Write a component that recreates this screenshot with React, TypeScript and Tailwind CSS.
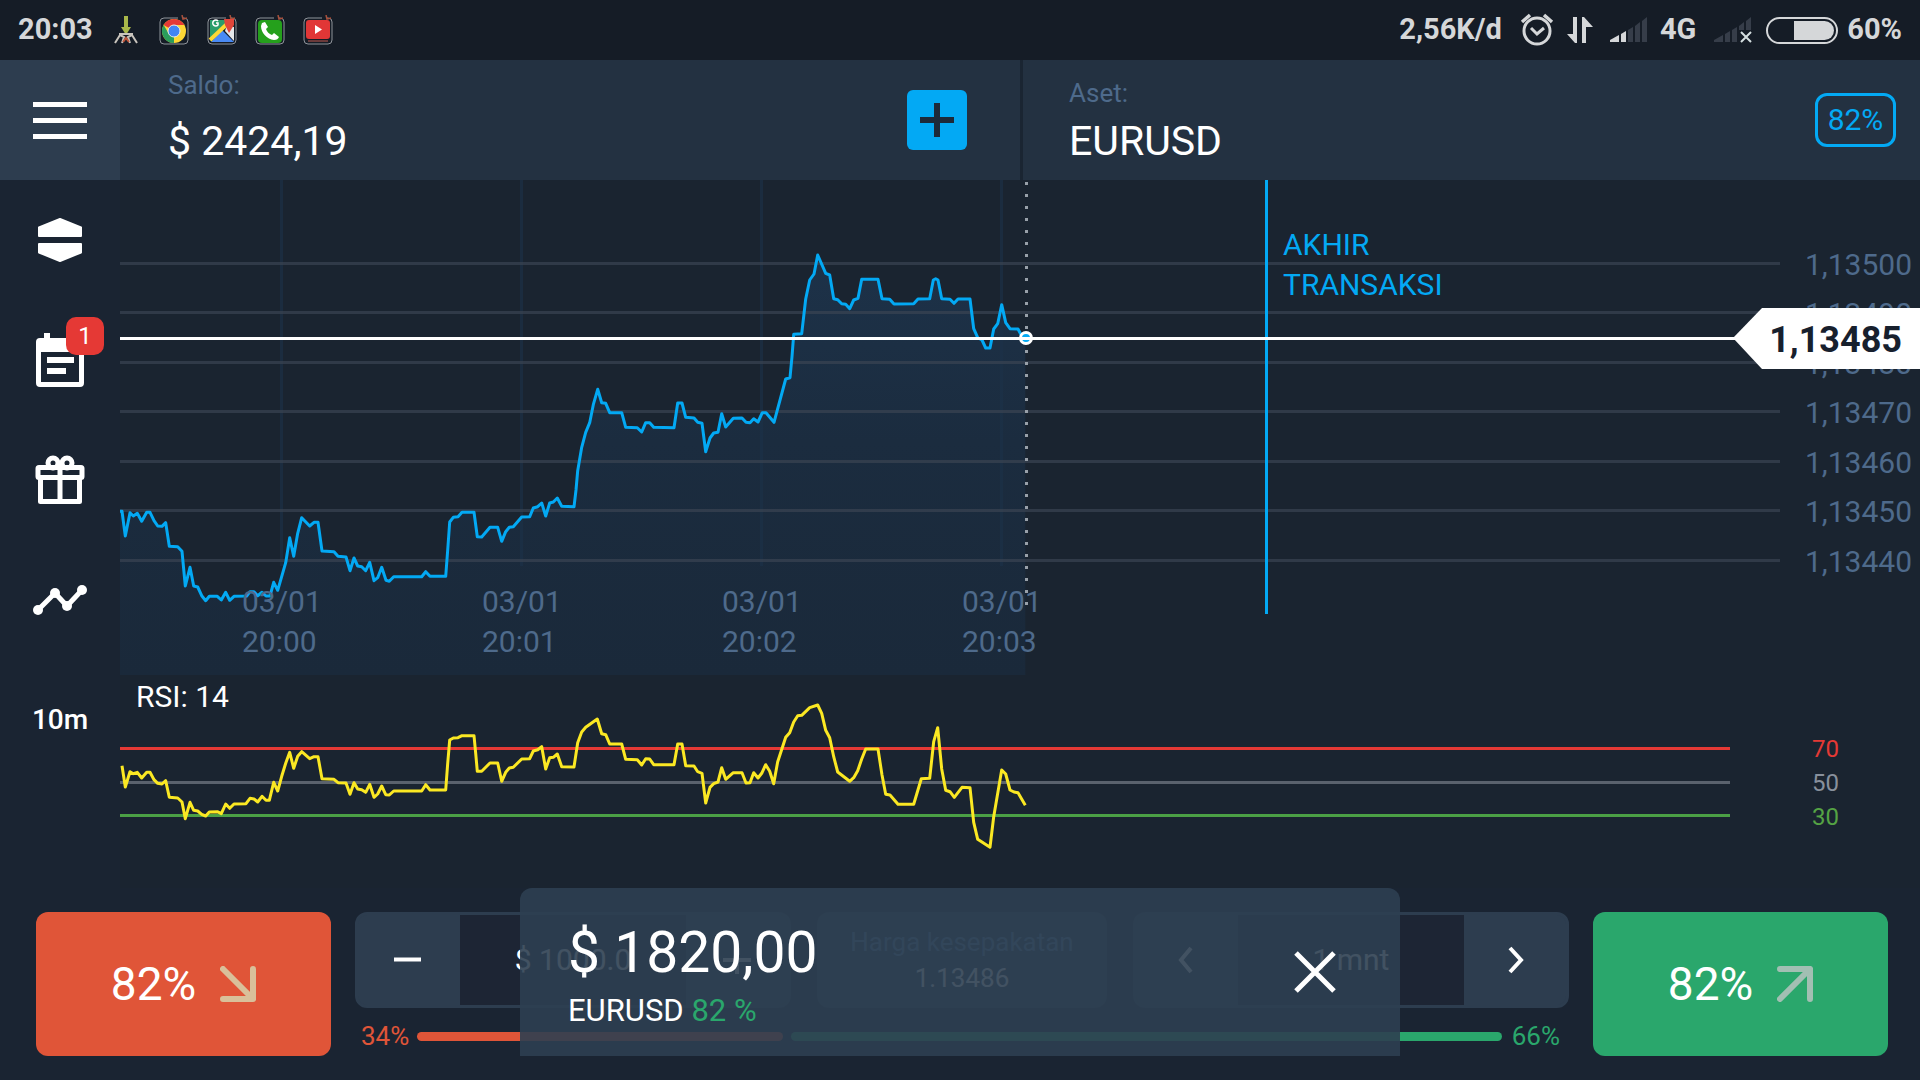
import type { ReactNode } from "react";

type Point = [number, number];

// Samples are stored at three units per chart pixel, relative to the origin of each batch.
const UNITS = 3;
const place = (points: Point[], ox: number, oy: number): Point[] =>
  points.map(([x, y]) => [ox + x / UNITS, oy + y / UNITS]);
const toPath = (points: Point[]) =>
  "M" + points.map(([x, y]) => `${x.toFixed(1)} ${y.toFixed(1)}`).join("L");

const price: Point[] = [
  ...place(
    [
      [60, 94], [66, 94], [76, 168], [90, 98], [100, 108], [112, 100], [125, 124], [140, 97], [150, 97], [162, 122],
      [173, 138], [186, 139], [197, 128], [208, 199], [233, 200], [246, 214], [256, 318], [270, 262], [281, 318],
      [293, 321], [305, 347], [317, 362], [328, 349], [352, 349], [364, 360], [377, 337], [389, 361], [402, 349],
      [440, 348], [450, 335], [462, 335], [473, 347], [486, 337], [498, 348], [510, 348], [521, 307], [533, 331],
      [557, 248], [569, 173], [581, 229], [593, 160], [605, 113], [629, 138], [642, 127], [654, 127], [666, 213],
      [702, 215], [714, 229], [738, 231], [750, 272], [762, 234], [773, 258], [785, 260], [797, 272], [809, 247],
      [822, 302], [833, 293], [845, 262], [858, 301], [868, 304], [881, 290], [965, 290], [977, 275], [990, 289],
      [1037, 289], [1043, 210], [1049, 126], [1060, 112], [1074, 110], [1086, 97], [1122, 97], [1132, 170],
      [1145, 171], [1170, 142], [1193, 142], [1205, 184], [1217, 155], [1228, 142], [1240, 140], [1265, 111],
      [1289, 110], [1300, 84], [1313, 80], [1325, 69],
    ],
    100,
    480,
  ),
  ...place(
    [
      [17, 858], [29, 819], [40, 816], [52, 804], [65, 829], [102, 830], [108, 780], [113, 722], [125, 652],
      [137, 607], [149, 578], [160, 524], [173, 478], [185, 518], [197, 520], [209, 548], [245, 548], [257, 592],
      [292, 593], [305, 606], [317, 578], [329, 578], [341, 592], [402, 593], [413, 519], [426, 519], [437, 562],
      [462, 564], [473, 577], [486, 580], [497, 665], [510, 624], [521, 609], [534, 607], [545, 551], [557, 591],
      [580, 565], [606, 564], [618, 577], [630, 578], [641, 566], [654, 576], [667, 548], [678, 548], [702, 577],
      [737, 447], [750, 443], [756, 380], [761, 313], [785, 311], [797, 207], [809, 150], [822, 132], [833, 75],
      [857, 130], [869, 135], [881, 206], [893, 209], [905, 221], [917, 223], [929, 236], [941, 210], [954, 205],
      [965, 148], [1014, 148], [1026, 206], [1049, 208], [1062, 222], [1121, 221], [1134, 207], [1169, 206],
      [1180, 150], [1187, 146], [1194, 150], [1205, 206], [1230, 208], [1242, 220], [1254, 207], [1290, 207],
      [1301, 296], [1313, 323], [1326, 330], [1337, 354], [1350, 354], [1361, 297], [1373, 281], [1385, 224],
      [1397, 278], [1410, 296], [1434, 297], [1442, 312], [1456, 325],
    ],
    540,
    230,
  ),
];

const rsi: Point[] = [
  ...place(
    [
      [66, 857], [76, 921], [90, 875], [100, 881], [112, 877], [125, 894], [140, 877], [150, 877], [162, 899],
      [173, 910], [186, 912], [197, 902], [208, 952], [233, 954], [246, 966], [256, 1016], [270, 967], [281, 991],
      [293, 993], [305, 1003], [317, 1008], [328, 996], [352, 995], [364, 1001], [377, 972], [389, 985], [402, 972],
      [438, 971], [450, 955], [462, 957], [473, 966], [486, 949], [498, 961], [508, 961], [521, 907], [533, 933],
      [545, 889], [557, 850], [569, 817], [581, 865], [593, 829], [605, 815], [629, 836], [642, 830], [654, 830],
      [666, 896], [702, 898], [714, 908], [738, 909], [750, 943], [762, 908], [773, 927], [785, 929], [797, 937],
      [809, 913], [822, 952], [833, 942], [845, 918], [857, 944], [868, 945], [881, 933], [965, 933], [977, 914],
      [990, 930], [1037, 930], [1043, 850], [1049, 780], [1060, 774], [1074, 773], [1086, 767], [1122, 767],
      [1127, 820], [1132, 874], [1145, 874], [1170, 849], [1193, 849], [1205, 904], [1217, 877], [1228, 864],
      [1240, 862], [1265, 837], [1289, 836], [1300, 813], [1313, 809], [1325, 800],
    ],
    100,
    480,
  ),
  ...place(
    [
      [17, 627], [29, 593], [40, 592], [52, 582], [65, 620], [102, 621], [113, 548], [125, 516], [137, 502],
      [172, 477], [185, 521], [197, 524], [209, 552], [245, 552], [257, 598], [292, 599], [305, 615], [317, 596],
      [329, 597], [341, 614], [402, 614], [413, 552], [426, 552], [437, 617], [462, 618], [473, 635], [486, 640],
      [497, 729], [510, 682], [521, 671], [534, 666], [545, 623], [557, 658], [580, 638], [606, 638], [618, 669],
      [630, 668], [641, 638], [654, 654], [665, 640], [677, 614], [689, 634], [701, 671], [713, 605], [737, 532],
      [749, 518], [761, 486], [773, 467], [785, 466], [809, 443], [833, 435], [845, 460], [857, 511], [869, 533],
      [881, 590], [893, 636], [929, 664], [941, 653], [953, 632], [965, 597], [977, 567], [1014, 567], [1026, 645],
      [1037, 703], [1050, 705], [1074, 733], [1121, 733], [1144, 656], [1169, 655], [1181, 545], [1193, 503],
      [1205, 627], [1217, 691], [1230, 695], [1243, 712], [1266, 682], [1290, 683], [1301, 787], [1313, 838],
      [1350, 862], [1361, 770], [1385, 630], [1397, 642], [1410, 690], [1422, 696], [1434, 698], [1456, 736],
    ],
    540,
    560,
  ),
];

const priceLine = toPath(price);
const priceArea = `${priceLine}V675H120Z`;
const rsiLine = toPath(rsi);

const priceLevels = [
  { y: 263, label: "1,13500" },
  { y: 312, label: "1,13490" },
  { y: 362, label: "1,13480" },
  { y: 411, label: "1,13470" },
  { y: 461, label: "1,13460" },
  { y: 510, label: "1,13450" },
  { y: 560, label: "1,13440" },
];

const timeMarks = [
  { x: 281, day: "03/01", time: "20:00" },
  { x: 521, day: "03/01", time: "20:01" },
  { x: 761, day: "03/01", time: "20:02" },
  { x: 1001, day: "03/01", time: "20:03" },
];

function Chart() {
  return (
    <svg viewBox="120 180 1800 708" className="block h-auto w-full bg-[#1a2430]" role="img" aria-label="EURUSD">
      <defs>
        <linearGradient id="area" gradientUnits="userSpaceOnUse" x1="0" y1="250" x2="0" y2="675">
          <stop offset="0" stopColor="#1d3249" />
          <stop offset="0.45" stopColor="#1b2c3f" />
          <stop offset="1" stopColor="#1a293a" />
        </linearGradient>
      </defs>
      <path d={priceArea} fill="url(#area)" />
      {timeMarks.map((m) => (
        <rect key={m.x} x={m.x - 1} y="180" width="3" height="386" fill="#1d3249" opacity="0.6" />
      ))}
      {priceLevels.map((l) => (
        <rect key={l.y} x="120" y={l.y - 1} width="1660" height="3" fill="#3a4452" opacity="0.7" />
      ))}
      <path d={priceLine} fill="none" stroke="#03a9f4" strokeWidth="3" strokeLinejoin="round" />
      <path d="M1026.5 182V606" stroke="#98a0a9" strokeWidth="3" strokeDasharray="3 9" />
      <g fontSize="30" fill="#4e6a8b">
        {timeMarks.map((m) => (
          <g key={m.x}>
            <text x={m.x - 39} y="612">
              {m.day}
            </text>
            <text x={m.x - 39} y="652">
              {m.time}
            </text>
          </g>
        ))}
        {priceLevels.map((l) => (
          <text key={l.y} x="1912" y={l.y + 12} textAnchor="end">
            {l.label}
          </text>
        ))}
      </g>
      <rect x="1265" y="180" width="3" height="434" fill="#03a9f4" />
      <g fontSize="30" fill="#03a9f4">
        <text x="1283" y="255">
          AKHIR
        </text>
        <text x="1283" y="295">
          TRANSAKSI
        </text>
      </g>
      <rect x="120" y="337" width="1620" height="3" fill="#fff" />
      <circle cx="1026" cy="338" r="5.500" fill="#03a9f4" stroke="#fff" strokeWidth="3" />
      <rect x="1020" y="337" width="12" height="3" fill="#fff" />
      <path d="M1733 338L1762 308H1920V369H1762Z" fill="#fff" />
      <text x="1902" y="352" textAnchor="end" fontSize="36" fontWeight="700" fill="#17202d">
        1,13485
      </text>

      <text x="136" y="707" fontSize="30" fill="#fff">
        RSI: 14
      </text>
      <rect x="120" y="747" width="1610" height="3" fill="#e53935" />
      <rect x="120" y="781" width="1610" height="3" fill="#5a626d" />
      <rect x="120" y="814" width="1610" height="3" fill="#4ba045" />
      <path d={rsiLine} fill="none" stroke="#fbe823" strokeWidth="3" strokeLinejoin="round" />
      <g fontSize="24">
        <text x="1812" y="757" fill="#e53935">
          70
        </text>
        <text x="1812" y="791" fill="#88909c">
          50
        </text>
        <text x="1812" y="825" fill="#55a344">
          30
        </text>
      </g>
    </svg>
  );
}

function AppTile({ children }: { children: ReactNode }) {
  return (
    <svg viewBox="0 0 30 30" className="size-[30px]" aria-hidden="true">
      <rect x="1" y="3" width="28" height="26" rx="4" fill="#151c26" stroke="#8f949a" strokeWidth="1" />
      <path d="M19 3H24" stroke="#151c26" strokeWidth="2" />
      <path d="M23 0L24 4L28 3" fill="none" stroke="#a8503c" strokeWidth="1.500" />
      {children}
    </svg>
  );
}

function SignalBars({ lit }: { lit: number }) {
  const bars = ["M0 26V24L9 19V26Z", "M11 26V18L16 15V26Z", "M18 26V14L23 11V26Z", "M25 26V10L30 6V26Z", "M32 26V5L37 1V26Z"];
  return (
    <svg viewBox="0 0 38 28" className="h-7 w-[38px]" aria-hidden="true">
      {bars.map((d, i) => (
        <path key={d} d={d} fill={i < lit ? "#d5d7d9" : "#363d49"} />
      ))}
      {lit === 0 && (
        <>
          <rect x="25" y="14" width="13" height="14" fill="#151c26" />
          <path d="M27 16L37 26M37 16L27 26" stroke="#d5dfe0" strokeWidth="2" />
        </>
      )}
    </svg>
  );
}

function StatusBar() {
  return (
    <div className="flex h-[60px] items-center justify-between bg-[#151c26] pr-[18px] pl-[18px] text-[29px] font-bold text-[#d5d7d9]">
      <div className="flex items-center gap-[18px]">
        <span>20:03</span>
        <svg viewBox="0 0 30 30" className="size-[30px]" aria-hidden="true">
          <path d="M13 1H17V12H20L15 20L10 12H13Z" fill="#a9b84a" />
          <path d="M4 28L9 20L13 22L11 28M26 28L21 20L17 22L19 28M8 19H22" fill="none" stroke="#c9c4bd" strokeWidth="2" />
          <path d="M12 27L15 23L18 27" fill="none" stroke="#c0563c" strokeWidth="2" />
        </svg>
        <AppTile>
          <circle cx="15" cy="16" r="12" fill="#fdd835" />
          <path d="M15 16L4.600 10A12 12 0 0 1 25.400 10H15Z" fill="#e53935" />
          <path d="M15 16V28A12 12 0 0 1 4.600 10L10 19Z" fill="#2a9d5c" />
          <circle cx="15" cy="16" r="6" fill="#4285f4" stroke="#e8ecef" strokeWidth="1" />
        </AppTile>
        <AppTile>
          <path d="M3 5H20V12L3 26Z" fill="#2a9d6a" />
          <path d="M4 27L15 15L27 27Z" fill="#4a8af4" />
          <path d="M20 10L27 12V26L18 16Z" fill="#e6e8ea" />
          <path d="M3 25L20 9" stroke="#fdd835" strokeWidth="4" />
          <path d="M17 4H27V10L22 18L18 10Z" fill="#e0463a" />
          <path d="M11 6A3 3 0 1 0 11 10V8H9" fill="none" stroke="#fff" strokeWidth="1.500" />
        </AppTile>
        <AppTile>
          <rect x="3" y="5" width="24" height="23" rx="4" fill="#25a01c" />
          <path
            d="M7 8L10 7L13 12L11 14C12 17 14 19 17 20L19 18L24 22C23 24 22 25 19 25C12 24 6 18 6 11Z"
            fill="#fff"
          />
        </AppTile>
        <AppTile>
          <rect x="3" y="5" width="24" height="19" rx="3" fill="#e13636" />
          <rect x="5" y="25" width="20" height="2" fill="#6b3a3a" />
          <path d="M12 10V19L19 14.500Z" fill="#fff" />
        </AppTile>
      </div>
      <div className="flex items-center">
        <span>2,56K/d</span>
        <svg viewBox="0 0 34 34" className="ml-[18px] size-[34px]" fill="none" stroke="#d5d7d9" aria-hidden="true">
          <circle cx="17" cy="18" r="13" strokeWidth="3" />
          <path d="M2 9L10 2M32 9L24 2" strokeWidth="3.500" />
          <path d="M11 15L17 21L24 15" strokeWidth="3" />
        </svg>
        <svg viewBox="0 0 28 28" className="ml-3 size-7" fill="#d5d7d9" aria-hidden="true">
          <path d="M7 1H11V27H9L1 18H7ZM16 1H18L27 11H20V27H16Z" />
        </svg>
        <span className="ml-4 flex">
          <SignalBars lit={2} />
        </span>
        <span className="ml-3">4G</span>
        <span className="ml-[18px] flex">
          <SignalBars lit={0} />
        </span>
        <span className="ml-[14px] flex h-[27px] w-[72px] justify-end rounded-full border-2 border-[#d5d7d9] p-[2px]">
          <span className="w-10 rounded-r-full bg-[#d5d7d9]" />
        </span>
        <span className="ml-[9px]">60%</span>
      </div>
    </div>
  );
}

function Header() {
  return (
    <header className="flex h-[120px] bg-[#233141] text-white">
      <button type="button" aria-label="Menu" className="flex w-[120px] shrink-0 items-center justify-center bg-[#2d3d4f]">
        <span className="flex w-[54px] flex-col gap-[11px]">
          <span className="h-[5px] bg-white" />
          <span className="h-[5px] bg-white" />
          <span className="h-[5px] bg-white" />
        </span>
      </button>
      <div className="grid flex-1 grid-cols-2">
        <div className="flex items-center justify-between pr-[53px] pl-12">
          <div className="flex flex-col gap-4 self-start pt-[9px]">
            <span className="text-[26px] leading-8 text-[#4e6a8b]">Saldo:</span>
            <span className="text-[41px] leading-[48px]">$ 2424,19</span>
          </div>
          <button
            type="button"
            aria-label="Deposit"
            className="flex size-[60px] items-center justify-center rounded-md bg-[#03a9f4]"
          >
            <svg viewBox="0 0 34 34" className="size-[34px]" aria-hidden="true">
              <path d="M17 0V34M0 17H34" stroke="#1d2a3a" strokeWidth="6" />
            </svg>
          </button>
        </div>
        <div className="flex items-center justify-between border-l-[3px] border-[#1a2532] pr-6 pl-[46px]">
          <div className="flex flex-col gap-2 self-start pt-[17px]">
            <span className="text-[26px] leading-8 text-[#4e6a8b]">Aset:</span>
            <span className="text-[41px] leading-[48px]">EURUSD</span>
          </div>
          <button
            type="button"
            className="flex h-[54px] w-[81px] items-center justify-center rounded-xl border-[3px] border-[#03a9f4] text-3xl text-[#03a9f4]"
          >
            82%
          </button>
        </div>
      </div>
    </header>
  );
}

function SideItem({ label, children }: { label: string; children: ReactNode }) {
  return (
    <button type="button" aria-label={label} className="flex h-[120px] w-full items-center justify-center">
      {children}
    </button>
  );
}

function Sidebar() {
  return (
    <nav className="w-[120px] shrink-0 bg-[#1a2432] text-white">
      <SideItem label="Assets">
        <svg viewBox="0 0 44 44" className="size-11" fill="currentColor" stroke="currentColor" strokeWidth="2" strokeLinejoin="round" aria-hidden="true">
          <path d="M1 18V9.500L22 1L43 9.500V18Z" />
          <path d="M1 26V34.500L22 43L43 34.500V26Z" />
        </svg>
      </SideItem>
      <SideItem label="Events">
        <span className="relative flex">
          <svg viewBox="0 0 50 54" className="h-[54px] w-[50px]" aria-hidden="true">
            <path d="M9 0H15V5H36V0H42V5H45A4 4 0 0 1 49 9V50A4 4 0 0 1 45 54H5A4 4 0 0 1 1 50V9A4 4 0 0 1 5 5H9Z" fill="#fff" />
            <rect x="6" y="19" width="38" height="30" fill="#1a2432" />
            <path d="M12 27H39M12 38H31" stroke="#fff" strokeWidth="6" />
          </svg>
          <span className="absolute -top-4 left-[31px] flex h-[38px] w-[38px] items-center justify-center rounded-[10px] bg-[#e53935] text-2xl">
            1
          </span>
        </span>
      </SideItem>
      <SideItem label="Bonuses">
        <svg viewBox="0 0 50 50" className="size-[50px]" fill="none" stroke="currentColor" strokeWidth="5" strokeLinejoin="round" aria-hidden="true">
          <circle cx="18" cy="8" r="5" />
          <circle cx="32" cy="8" r="5" />
          <rect x="3" y="12.500" width="44" height="10" rx="1" />
          <path d="M5.500 22V46.500H44.500V22M25 12V46" />
        </svg>
      </SideItem>
      <SideItem label="Indicators">
        <svg viewBox="0 0 54 32" className="h-8 w-[54px]" aria-hidden="true">
          <path d="M5 26L22 9L34 22L49 6" fill="none" stroke="#fff" strokeWidth="5" />
          <g fill="#fff">
            <circle cx="5" cy="26" r="5" />
            <circle cx="22" cy="9" r="5" />
            <circle cx="34" cy="22" r="5" />
            <circle cx="49" cy="6" r="5" />
          </g>
        </svg>
      </SideItem>
      <SideItem label="Timeframe">
        <span className="text-[28px] font-medium">10m</span>
      </SideItem>
    </nav>
  );
}

function StepButton({ label, d }: { label: string; d: string }) {
  return (
    <button type="button" aria-label={label} className="flex w-[102px] shrink-0 items-center justify-center text-white">
      <svg viewBox="0 0 30 30" className="size-[30px]" fill="none" stroke="currentColor" strokeWidth="4" aria-hidden="true">
        <path d={d} />
      </svg>
    </button>
  );
}

function Stepper({ label, value, down, up }: { label: string; value: string; down: string; up: string }) {
  return (
    <div className="flex h-24 min-w-0 flex-[435] rounded-xl border-[3px] border-[#2d3d4f] bg-[#2d3d4f]">
      <StepButton label={`${label} -`} d={down} />
      <input aria-label={label} defaultValue={value} className="w-full min-w-0 flex-1 bg-[#1d2534] text-center text-3xl text-white" />
      <StepButton label={`${label} +`} d={up} />
    </div>
  );
}

function TradeFooter() {
  return (
    <footer className="relative flex gap-6 bg-[#1a2432] pt-6 pr-8 pb-6 pl-9">
      <button type="button" className="flex h-36 w-[295px] shrink-0 items-center justify-center gap-6 rounded-xl bg-[#e05538] text-[46px] text-white">
        82%
        <svg viewBox="0 0 36 36" className="size-9" fill="none" stroke="#d9c09a" strokeWidth="6" strokeLinejoin="round" strokeLinecap="round" aria-hidden="true">
          <path d="M3 3L33 33M33 3V33H3" />
        </svg>
      </button>
      <div className="min-w-0 flex-1">
        <div className="flex gap-[26px]">
          <Stepper label="Investasi" value="$ 1000.0" down="M0 14.500H27" up="M1 15H29M15 1V29" />
          <div className="flex h-24 min-w-0 flex-[293] flex-col items-center justify-center rounded-xl bg-[#2d3d4f] text-[26px] leading-9">
            <span className="whitespace-nowrap text-[#5f83ad]">Harga kesepakatan</span>
            <span className="text-white">1.13486</span>
          </div>
          <Stepper label="Durasi" value="1 mnt" down="M19 3L9 15L19 27" up="M10 3L21 15L10 27" />
        </div>
        <div className="mt-3 flex items-center pr-[9px] pl-[6px] text-[26px] leading-8">
          <span className="text-[#e05538]">34%</span>
          <span className="ml-2 h-[9px] flex-[34] rounded-full bg-[#e05538]" />
          <span className="mr-[10px] ml-2 h-[9px] flex-[66] rounded-full bg-[#2aa76c]" />
          <span className="text-[#2aa76c]">66%</span>
        </div>
      </div>
      <button type="button" className="flex h-36 w-[295px] shrink-0 items-center justify-center gap-6 rounded-xl bg-[#2aa76c] text-[46px] text-white">
        82%
        <svg viewBox="0 0 36 36" className="size-9" fill="none" stroke="#a2bfb3" strokeWidth="6" strokeLinejoin="round" strokeLinecap="round" aria-hidden="true">
          <path d="M3 33L33 3M3 3H33V33" />
        </svg>
      </button>
      <div role="dialog" aria-label="$ 1820,00" className="absolute top-0 bottom-6 left-1/2 flex w-[880px] -translate-x-1/2 justify-between rounded-t-xl bg-[#2e3f51]/90 pr-[64px] pl-12 text-white">
        <div className="flex flex-col gap-2 pt-[33px]">
          <span className="text-[57px] leading-[64px]">$ 1820,00</span>
          <span className="text-[31px] leading-9">
            EURUSD <span className="text-[#2aa76c]">82 %</span>
          </span>
        </div>
        <button type="button" aria-label="Tutup" className="self-center">
          <svg viewBox="0 0 42 42" className="size-[42px]" aria-hidden="true">
            <path d="M2 2L40 40M40 2L2 40" stroke="#fff" strokeWidth="5" />
          </svg>
        </button>
      </div>
    </footer>
  );
}

export default function App() {
  return (
    <div className="flex min-h-screen flex-col bg-[#1a2432] font-['Roboto',sans-serif]">
      <StatusBar />
      <Header />
      <main className="flex flex-1">
        <Sidebar />
        <div className="min-w-0 flex-1">
          <Chart />
        </div>
      </main>
      <TradeFooter />
    </div>
  );
}
